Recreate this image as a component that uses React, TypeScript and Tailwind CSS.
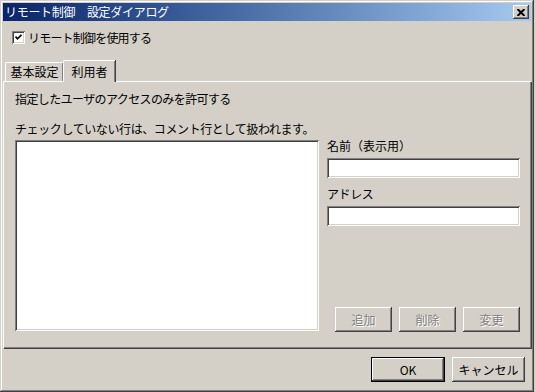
import React from "react"

const font = "font-['MS_UI_Gothic','Noto_Sans_CJK_JP',sans-serif]"
const raised =
  "bg-[#d4d0c8] shadow-[inset_-1px_-1px_#404040,inset_1px_1px_#ffffff,inset_-2px_-2px_#808080,inset_2px_2px_#d4d0c8]"
const sunken =
  "bg-white shadow-[inset_1px_1px_#808080,inset_-1px_-1px_#ffffff,inset_2px_2px_#404040,inset_-2px_-2px_#d4d0c8]"

function Btn({ label, disabled, def, w }: { label: string; disabled?: boolean; def?: boolean; w: string }) {
  const text = disabled ? "text-[#808080] [text-shadow:1px_1px_0_#ffffff]" : "text-black"
  if (def) {
    return (
      <div className={`${w} h-[25px] border border-black`}>
        <div className={`w-full h-full ${raised} flex items-center justify-center text-[12px] ${text}`}>{label}</div>
      </div>
    )
  }
  return <div className={`${w} h-[25px] ${raised} flex items-center justify-center text-[12px] ${text}`}>{label}</div>
}

export default function App() {
  return (
    <div className={`w-[535px] h-[392px] bg-[#d4d0c8] ${font} text-black overflow-hidden`}>
      <div className="w-[534px] h-[392px] pt-[3px] pl-[3px] pr-[3px] flex flex-col shadow-[inset_-1px_-1px_#404040,inset_1px_1px_#d4d0c8,inset_-2px_-2px_#808080,inset_2px_2px_#ffffff]">
        {/* Title bar */}
        <div className="h-[18px] bg-gradient-to-r from-[#0a246a] to-[#a6caf0] flex items-center pl-[2px] pr-[2px]">
          <span className="text-white text-[12px] leading-[18px] tracking-[-0.3px]">リモート制御　設定ダイアログ</span>
          <div className={`ml-auto w-[16px] h-[14px] ${raised} flex items-center justify-center`}>
            <svg width="8" height="7" viewBox="0 0 8 7">
              <path d="M0.5 0 L7.5 7 M7.5 0 L0.5 7" stroke="black" strokeWidth="2" />
            </svg>
          </div>
        </div>

        {/* Checkbox */}
        <div className="mt-[10px] ml-[9px] flex items-center h-[13px]">
          <div className={`w-[13px] h-[13px] ${sunken} flex items-center justify-center`}>
            <svg width="7" height="7" viewBox="0 0 7 7">
              <path d="M0.5 2.5 L2.5 4.8 L6.5 0.8" stroke="black" strokeWidth="1.7" fill="none" />
            </svg>
          </div>
          <span className="ml-[3px] text-[12px] leading-[14px] tracking-[-0.8px]">リモート制御を使用する</span>
        </div>

        {/* Tabs */}
        <div className="mt-[16px] flex items-end h-[21px] pl-[2px] relative z-10">
          <div className="h-[19px] w-[58px] border-l border-t border-white rounded-tl-[2px] shadow-[inset_-1px_0_#808080,1px_0_#404040] flex items-center justify-center text-[12px]">
            基本設定
          </div>
          <div className="h-[22px] w-[52px] bg-[#d4d0c8] border-l border-t border-white rounded-tl-[2px] shadow-[inset_-1px_0_#808080,1px_0_#404040] flex items-start justify-center pt-[2px] text-[12px] mb-[-1px]">
            利用者
          </div>
        </div>

        {/* Panel */}
        <div className="w-[528px] h-[267px] border-l border-t border-white shadow-[inset_-1px_-1px_#808080,1px_1px_#404040] pt-[10px] pl-[11px] pr-[11px] flex flex-col">
          <div className="text-[12px] leading-[14px] tracking-[-0.6px]">指定したユーザのアクセスのみを許可する</div>
          <div className="mt-[16px] flex h-[210px]">
            <div className="w-[304px] flex flex-col">
              <div className="text-[12px] leading-[14px] tracking-[-0.4px] whitespace-nowrap">チェックしていない行は、コメント行として扱われます。</div>
              <div className={`mt-[4px] h-[191px] ${sunken}`} />
            </div>
            <div className="ml-[8px] w-[193px] flex flex-col">
              <div className="mt-[17px] text-[12px] leading-[14px]">名前（表示用）</div>
              <div className={`mt-[5px] h-[20px] ${sunken}`} />
              <div className="mt-[9px] text-[12px] leading-[14px] tracking-[-0.4px]">アドレス</div>
              <div className={`mt-[5px] h-[20px] ${sunken}`} />
              <div className="mt-auto flex justify-end gap-[7px]">
                <Btn label="追加" disabled w="w-[57px]" />
                <Btn label="削除" disabled w="w-[57px]" />
                <Btn label="変更" disabled w="w-[57px]" />
              </div>
            </div>
          </div>
        </div>

        {/* Bottom buttons */}
        <div className="mt-[9px] flex justify-end gap-[7px] pr-[6px]">
          <Btn label="OK" def w="w-[74px]" />
          <Btn label="キャンセル" w="w-[73px]" />
        </div>
      </div>
    </div>
  )
}
